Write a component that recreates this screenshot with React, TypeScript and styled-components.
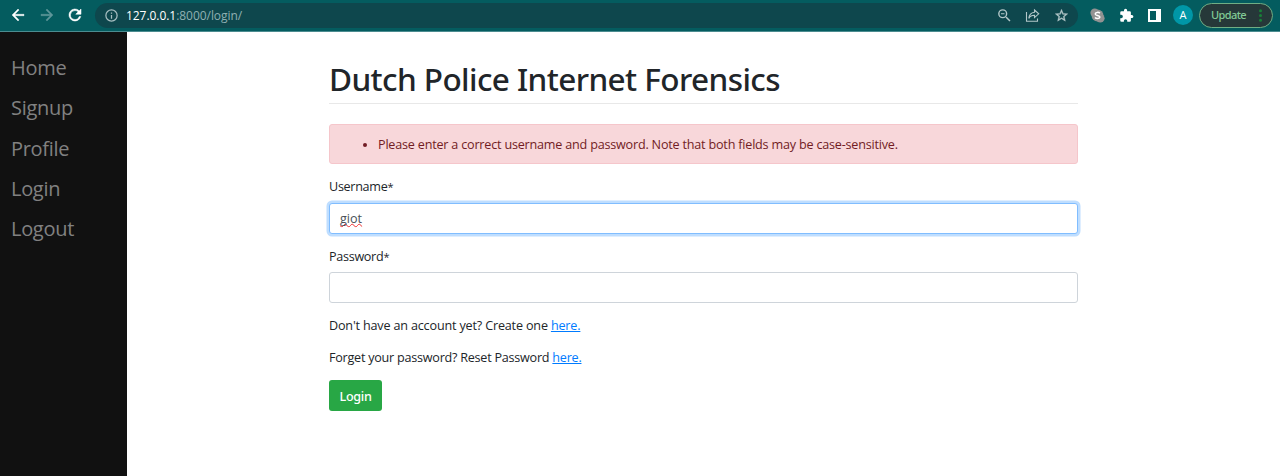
import React from "react";
import styled, { createGlobalStyle } from "styled-components";

const GlobalStyle = createGlobalStyle`
  *, *::before, *::after { box-sizing: border-box; }
  body {
    margin: 0;
    background: #fff;
    color: #212529;
    font: 400 12.6px/20px "Open Sans", "Noto Sans", sans-serif;
  }
`;

const Page = styled.div`
  height: 476px;
  display: flex;
  flex-direction: column;
  overflow: hidden;
`;

const BrowserBar = styled.header`
  flex: none;
  height: 32px;
  display: flex;
  align-items: center;
  padding: 0 7px 1px 8px;
  background: #045c5f;
  border-bottom: 1px solid #4b8c90;
`;

const IconSlot = styled.span<{ $w: number; $color?: string }>`
  flex: none;
  width: ${(p) => p.$w}px;
  display: flex;
  justify-content: center;
  color: ${(p) => p.$color ?? "#fff"};
  svg { display: block; }
`;

const AddressBar = styled.div`
  flex: 1;
  height: 25px;
  display: flex;
  align-items: center;
  padding: 0 3px 0 6px;
  margin-left: 5px;
  border-radius: 13px;
  background: #0e474d;
`;

const Url = styled.span`
  flex: 1;
  margin-left: 5px;
  padding-top: 1px;
  font-size: 12px;
  letter-spacing: -0.05px;
  color: #8eb0b2;
  white-space: nowrap;
`;

const Host = styled.span`
  color: #fff;
`;

const Avatar = styled.span`
  flex: none;
  width: 20px;
  height: 20px;
  margin: 0 6px 0 0;
  border-radius: 50%;
  background: #0097a7;
  color: #fff;
  font-size: 11px;
  line-height: 20px;
  text-align: center;
`;

const UpdateButton = styled.button`
  flex: none;
  width: 74px;
  height: 25px;
  display: flex;
  align-items: center;
  justify-content: space-between;
  padding: 0 10px 0 11px;
  border: 1px solid #6fae85;
  border-radius: 13px;
  background: #263839;
  color: #81c995;
  font: 500 11px/20px "Noto Sans", sans-serif;
  letter-spacing: -0.6px;
`;

const Body = styled.div`
  flex: 1;
  display: flex;
`;

const Sidebar = styled.nav`
  flex: none;
  width: 127px;
  padding: 16.4px 0 0 11px;
  background: #111;
`;

const NavLink = styled.a`
  display: block;
  height: 40.1px;
  font-size: 20px;
  line-height: 40px;
  letter-spacing: -0.3px;
  color: #818181;
  text-decoration: none;
`;

const Main = styled.main`
  width: 749px;
  margin-left: 202px;
  padding-top: 28px;
`;

const Heading = styled.h1`
  height: 44px;
  margin: 0 0 20px;
  border-bottom: 1px solid #e8e8e8;
  font-family: "Noto Sans", sans-serif;
  font-size: 31.5px;
  font-weight: 500;
  letter-spacing: -0.58px;
  line-height: 38px;
  white-space: nowrap;
`;

const Alert = styled.ul`
  height: 40px;
  margin: 0 0 13px;
  padding: 10px 0 0 48px;
  border: 1px solid #f5c6cb;
  border-radius: 3px;
  background: #f8d7da;
  color: #721c24;
  letter-spacing: -0.2px;
`;

const Label = styled.label`
  display: block;
  height: 20px;
  margin-bottom: 5.5px;
  letter-spacing: -0.3px;
`;

const Required = styled.span`
  font-size: 11px;
`;

const Input = styled.input<{ $focused?: boolean }>`
  display: block;
  width: 100%;
  height: 31px;
  padding: 0 10px;
  margin-bottom: 13px;
  border: 1px solid ${(p) => (p.$focused ? "#80bdff" : "#ced4da")};
  border-radius: 3px;
  outline: 0;
  box-shadow: ${(p) => (p.$focused ? "0 0 0 2.5px #bfdeff" : "none")};
  background: #fff;
  color: #495057;
  font: inherit;
`;

const FocusedField = styled(Input).attrs({ as: "div" })`
  line-height: 30px;
`;

const Misspelled = styled.span`
  text-decoration: underline wavy #e33 1px;
  text-decoration-skip-ink: none;
  text-underline-offset: 0;
`;

const Paragraph = styled.p<{ $tracking: number }>`
  height: 20px;
  margin: 0 0 12px;
  letter-spacing: ${(p) => p.$tracking}px;
`;

const Link = styled.a`
  color: #007bff;
  text-decoration: underline;
`;

const SubmitButton = styled.button`
  width: 53px;
  height: 31px;
  padding: 2px 0 0;
  border: 0;
  border-radius: 3px;
  background: #28a745;
  color: #fff;
  font: 500 12.6px/20px "Noto Sans", sans-serif;
  letter-spacing: -0.3px;
`;

const Glyph = ({ size, children }: { size: number; children: React.ReactNode }) => (
  <svg width={size} height={size} viewBox="0 0 24 24" fill="currentColor">
    {children}
  </svg>
);

const NAV = ["Home", "Signup", "Profile", "Login", "Logout"];

export default function App() {
  return (
    <Page>
      <GlobalStyle />
      <BrowserBar>
        <IconSlot $w={20}>
          <Glyph size={18}><path d="M20 11H7.83l5.59-5.59L12 4l-8 8 8 8 1.41-1.41L7.83 13H20z" stroke="currentColor" strokeWidth=".5" /></Glyph>
        </IconSlot>
        <IconSlot $w={37} $color="#5e969a">
          <Glyph size={18}><path d="M4 11h12.17l-5.59-5.59L12 4l8 8-8 8-1.41-1.41L16.17 13H4z" stroke="currentColor" strokeWidth=".5" /></Glyph>
        </IconSlot>
        <IconSlot $w={20}>
          <Glyph size={18}><path d="M17.65 6.35A8 8 0 1 0 19.73 14h-2.08A6 6 0 1 1 12 6c1.66 0 3.14.69 4.22 1.78L13 11h7V4z" stroke="currentColor" strokeWidth=".7" /></Glyph>
        </IconSlot>
        <IconSlot $w={5} />
        <AddressBar>
          <IconSlot $w={20} $color="#a7bec1">
            <Glyph size={15}><path d="M11 7h2v2h-2zm0 4h2v6h-2zm1-9a10 10 0 1 0 0 20 10 10 0 0 0 0-20zm0 18a8 8 0 1 1 0-16 8 8 0 0 1 0 16z" /></Glyph>
          </IconSlot>
          <Url><Host>127.0.0.1</Host>:8000/login/</Url>
          <IconSlot $w={28} $color="#b3c7c9">
            <Glyph size={17}><path d="M15.5 14h-.79l-.28-.27A6.47 6.47 0 0 0 16 9.5 6.5 6.5 0 1 0 9.5 16c1.61 0 3.09-.59 4.23-1.57l.27.28v.79l5 4.99L20.49 19zm-6 0a4.5 4.5 0 1 1 0-9 4.5 4.5 0 0 1 0 9zM7 8.7h5v1.5H7z" /></Glyph>
          </IconSlot>
          <IconSlot $w={29} $color="#b3c7c9">
            <svg width="15" height="15" viewBox="0 0 15 15" fill="none" stroke="currentColor" strokeWidth="1.1">
              <path d="M1.5 4v9.3h11V10.5M9.5 2l4.2 3.8-4.2 3.8V7.3C6.9 7.3 5 8.2 3.8 10.4 4.1 7 6.1 4.8 9.5 4.3z" />
            </svg>
          </IconSlot>
          <IconSlot $w={28} $color="#b3c7c9">
            <Glyph size={15}><path d="m22 9.24-7.19-.62L12 2 9.19 8.63 2 9.24l5.46 4.73L5.82 21 12 17.27 18.18 21l-1.63-7.03zM12 15.4l-3.76 2.27 1-4.28-3.32-2.88 4.38-.38L12 6.1l1.71 4.04 4.38.38-3.32 2.88 1 4.28z" stroke="currentColor" strokeWidth=".6" /></Glyph>
          </IconSlot>
        </AddressBar>
        <IconSlot $w={39}>
          <svg width="15" height="15" viewBox="0 0 15 15">
            <circle cx="4.7" cy="4.7" r="4.3" fill="#929292" />
            <circle cx="10.3" cy="10.3" r="4.3" fill="#929292" />
            <circle cx="7.5" cy="7.5" r="6" fill="#929292" />
            <path d="M9.9 5.2C8.9 4 5.2 4 5.2 5.9c0 2 4.7 1.1 4.7 3.2 0 1.9-3.8 1.9-4.9.4" fill="none" stroke="#fff" strokeWidth="1.5" />
          </svg>
        </IconSlot>
        <IconSlot $w={18}>
          <Glyph size={15}><path d="M20.5 11H19V7a2 2 0 0 0-2-2h-4V3.5a2.5 2.5 0 0 0-5 0V5H4a2 2 0 0 0-2 2v3.8h1.5a2.7 2.7 0 0 1 0 5.4H2V20a2 2 0 0 0 2 2h3.8v-1.5a2.7 2.7 0 0 1 5.4 0V22H17a2 2 0 0 0 2-2v-4h1.5a2.5 2.5 0 0 0 0-5z" /></Glyph>
        </IconSlot>
        <IconSlot $w={38}>
          <svg width="13" height="13" viewBox="0 0 13 13" fill="currentColor">
            <path fillRule="evenodd" d="M0 0h13v13H0zM2 2v9h6V2z" />
          </svg>
        </IconSlot>
        <Avatar>A</Avatar>
        <UpdateButton>
          Update
          <svg width="3" height="13" viewBox="0 0 3 13" fill="#188038">
            <circle cx="1.5" cy="1.8" r="1.5" />
            <circle cx="1.5" cy="6.5" r="1.5" />
            <circle cx="1.5" cy="11.2" r="1.5" />
          </svg>
        </UpdateButton>
      </BrowserBar>
      <Body>
        <Sidebar>
          {NAV.map((n) => (
            <NavLink key={n}>{n}</NavLink>
          ))}
        </Sidebar>
        <Main>
          <Heading>Dutch Police Internet Forensics</Heading>
          <Alert>
            <li>Please enter a correct username and password. Note that both fields may be case-sensitive.</li>
          </Alert>
          <Label>Username<Required>*</Required></Label>
          <FocusedField $focused><Misspelled>giot</Misspelled></FocusedField>
          <Label>Password<Required>*</Required></Label>
          <Input type="password" />
          <Paragraph $tracking={-0.17}>Don't have an account yet? Create one <Link>here.</Link></Paragraph>
          <Paragraph $tracking={-0.24}>Forget your password? Reset Password <Link>here.</Link></Paragraph>
          <SubmitButton>Login</SubmitButton>
        </Main>
      </Body>
    </Page>
  );
}
